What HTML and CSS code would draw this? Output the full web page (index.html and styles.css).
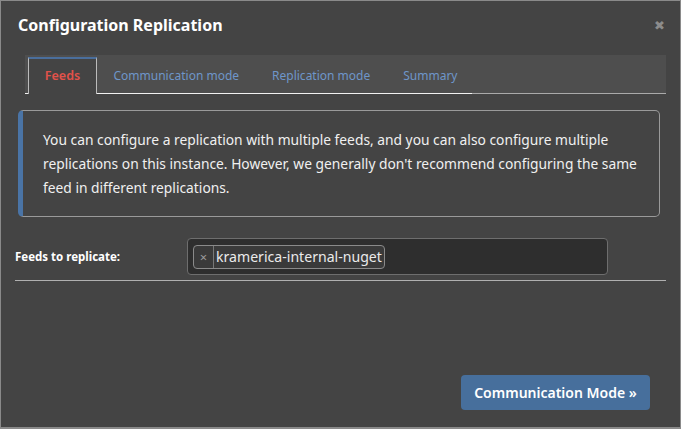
FILE: index.html
```html
<!DOCTYPE html>
<html>
<head>
<meta charset="utf-8">
<link rel="stylesheet" href="styles.css">
</head>
<body>
<div class="modal">
  <div class="header">
    <h1 class="title">Configuration Replication</h1>
    <span class="close">&#x2716;</span>
  </div>
  <div class="tabs">
    <div class="tab active">Feeds</div>
    <div class="tab">Communication mode</div>
    <div class="tab">Replication mode</div>
    <div class="tab">Summary</div>
  </div>
  <div class="info">
    You can configure a replication with multiple feeds, and you can also configure multiple replications on this instance. However, we generally don't recommend configuring the same feed in different replications.
  </div>
  <div class="field">
    <label class="label">Feeds to replicate:</label>
    <div class="input">
      <span class="tag"><span class="tag-x">&times;</span><span class="tag-text">kramerica-internal-nuget</span></span>
    </div>
  </div>
  <div class="footer">
    <button class="btn">Communication Mode &raquo;</button>
  </div>
</div>
</body>
</html>
```
FILE: styles.css
```css
* { box-sizing: border-box; }
html, body { margin: 0; padding: 0; }
body {
  background: #444444;
  font-family: "Noto Sans", "Open Sans", sans-serif;
  color: #eeeeee;
}
.modal {
  height: 429px;
  width: 681px;
  border: 1px solid #8a8a8a;
  border-bottom-width: 2px;
  display: flex;
  flex-direction: column;
  background: #444444;
}
.header {
  display: flex;
  justify-content: space-between;
  padding: 11px 14px 0 17px;
  height: 54px;
  align-items: flex-start;
}
.title {
  margin: 0;
  font-size: 16px;
  font-weight: 700;
  color: #ffffff;
  line-height: 26px;
}
.close {
  color: #8c8c8c;
  font-size: 13px;
  line-height: 26px;
  margin-right: 1px;
}
.tabs {
  margin: 0 14px 0 24px;
  height: 39px;
  background: #4e4e4e;
  display: flex;
  align-items: flex-end;
  padding-left: 3px;
  border-bottom: 1px solid #aaaaaa;
  position: relative;
}
.tabs::after {
  content: "";
  position: absolute;
  left: 0;
  bottom: -1px;
  width: 447px;
  height: 1px;
  background: #f2f2f2;
}
.tab {
  font-size: 12px;
  color: #6e96c9;
  height: 36px;
  line-height: 38px;
  padding: 0 16.5px;
}
.tab.active {
  color: #e2524a;
  font-weight: 600;
  font-size: 12.5px;
  background: #444444;
  border-top: 2px solid #4a6e9c;
  border-left: 1px solid #bbbbbb;
  border-right: 1px solid #bbbbbb;
  width: 69px;
  padding: 0;
  text-align: center;
  line-height: 34px;
  position: relative;
  z-index: 1;
  margin-bottom: -1px;
  height: 37px;
}
.info {
  margin: 16px 20px 0 17px;
  border: 1px solid #9a9a9a;
  border-left: 5px solid #4a74a6;
  border-radius: 5px;
  padding: 17px 14px 20px 20px;
  font-size: 13.8px;
  line-height: 24px;
  color: #f0f0f0;
  height: 107px;
}
.field {
  display: flex;
  align-items: center;
  margin: 21px 14px 0 14px;
  padding-bottom: 5px;
  border-bottom: 1px solid #b0b0b0;
}
.label {
  font-size: 11.5px;
  font-weight: 700;
  color: #ffffff;
  width: 172px;
  padding-left: 0;
}
.input {
  width: 421px;
  height: 37px;
  background: #2e2e2e;
  border: 1px solid #6e6e6e;
  border-radius: 4px;
  padding: 0 5px;
  display: flex;
  align-items: center;
}
.tag {
  display: inline-flex;
  align-items: center;
  height: 24px;
  border: 1px solid #8a8a8a;
  border-radius: 4px;
  background: #3a3a3a;
}
.tag-x {
  color: #9a9a9a;
  font-size: 13px;
  width: 20px;
  text-align: center;
  border-right: 1px solid #777777;
  height: 100%;
  line-height: 22px;
}
.tag-text {
  font-size: 14.1px;
  color: #eaeaea;
  padding: 0 2px 0 2px;
  line-height: 22px;
}
.footer {
  margin-top: auto;
  display: flex;
  justify-content: flex-end;
  padding: 0 30px 17px 0;
}
.btn {
  background: #476f9c;
  border: none;
  border-radius: 4px;
  color: #ffffff;
  font-family: "Noto Sans", "Open Sans", sans-serif;
  font-size: 14px;
  font-weight: 600;
  width: 189px;
  height: 35px;
  padding: 0;
}
```
